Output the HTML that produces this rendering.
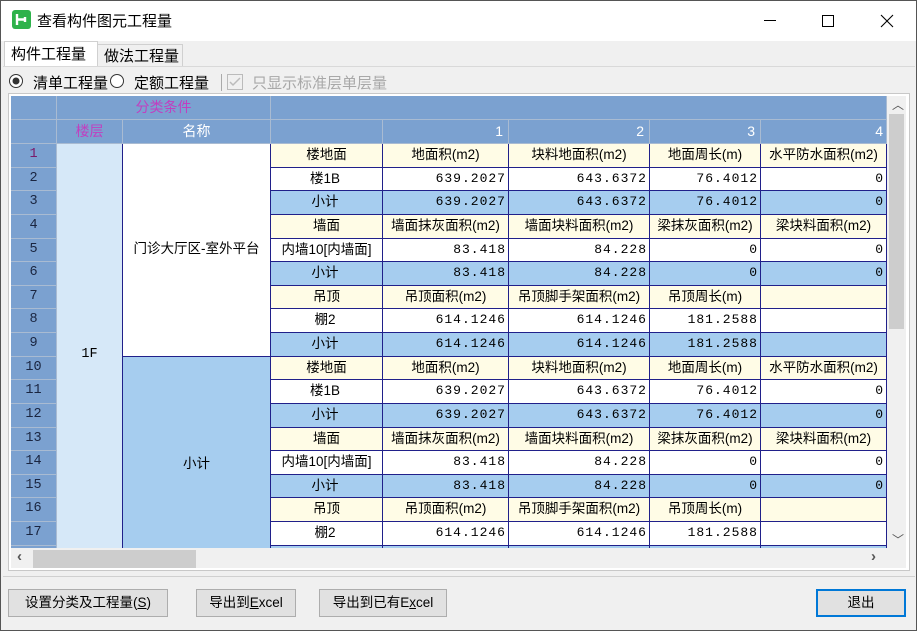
<!DOCTYPE html>
<html><head><meta charset="utf-8"><style>
*{box-sizing:border-box;margin:0;padding:0}
body{width:917px;height:631px;background:#f0f0f0;font-family:"Liberation Sans","Noto Sans CJK SC",sans-serif;font-size:14px;color:#000;position:relative;overflow:hidden}
.win{position:absolute;left:0;top:0;width:917px;height:631px;border:1px solid #555;background:#f0f0f0}
.title{position:absolute;left:0;top:0;width:915px;height:40px;background:#fff}
.abs{position:absolute}
.tab{position:absolute;border:1px solid #d0d0d0;border-bottom:none;background:#f0f0f0;font-size:15px;padding:1px 0 0 6px}
.grid{position:absolute;left:10px;top:143px;width:876px;height:404px;overflow:hidden;display:grid;grid-template-columns:46px 66px 148px 112px 126px 141px 111px 126px;grid-template-rows:repeat(18,23.625px);font-size:13.5px}
.grid div{border-right:1px solid #20208a;border-bottom:1px solid #20208a;white-space:nowrap;overflow:hidden;line-height:22px}
.grid .rn{background:#7ba1d0;border-color:#a9bbd2;text-align:center;color:#1a2540;font-family:"Liberation Mono",monospace}
.y{background:#fffce6;text-align:center}
.w{background:#fff;text-align:right;padding-right:3px}
.b{background:#a6cdef;text-align:right;padding-right:3px}
.w.n,.b.n{font-family:"Liberation Mono",monospace;font-size:13px;letter-spacing:1px;padding-right:2px}
.c{text-align:center}
.hdr{position:absolute;background:#7ba1d0;border-right:1px solid #a9bbd2;border-bottom:1px solid #a9bbd2;color:#fff;font-size:14px;text-align:center;line-height:23px}
.btn{position:absolute;top:588px;height:28px;background:#e1e1e1;border:1px solid #adadad;font-size:13.5px;text-align:center;line-height:26px}
</style></head><body><div class="win">
<div class="title">
<div class="abs" style="left:11px;top:9px;width:19px;height:19px;background:#2eb24b;border-radius:3px"><svg width="19" height="19"><path d="M5 4v11M5 9.5h8M13 7v5" stroke="#fff" stroke-width="2.4" fill="none"/></svg></div>
<div class="abs" style="left:36px;top:9px;font-size:15px">查看构件图元工程量</div>
<div class="abs" style="left:763px;top:19px;width:12px;height:1px;background:#000"></div>
<div class="abs" style="left:821px;top:14px;width:12px;height:12px;border:1px solid #000"></div>
<svg class="abs" style="left:879px;top:13px" width="14" height="14"><path d="M1 1L13 13M13 1L1 13" stroke="#000" stroke-width="1.1"/></svg>
</div>
<div class="tab" style="left:3px;top:40px;width:94px;height:26px;background:#fff;border-color:#d0d0d0">构件工程量</div>
<div class="tab" style="left:96px;top:43px;width:86px;height:22px;padding-top:0">做法工程量</div>
<div class="abs" style="left:2px;top:65px;width:912px;height:1px;background:#d9d9d9"></div>
<svg class="abs" style="left:7px;top:72px" width="16" height="16"><circle cx="8" cy="8" r="6.5" fill="#fff" stroke="#333"/><circle cx="8" cy="8" r="3.5" fill="#333"/></svg>
<div class="abs" style="left:32px;top:71px;font-size:15px">清单工程量</div>
<svg class="abs" style="left:108px;top:72px" width="16" height="16"><circle cx="8" cy="8" r="6.5" fill="#fff" stroke="#333"/></svg>
<div class="abs" style="left:133px;top:71px;font-size:15px">定额工程量</div>
<div class="abs" style="left:220px;top:73px;width:1px;height:17px;background:#aaa"></div>
<svg class="abs" style="left:226px;top:73px" width="16" height="16"><rect x="0.5" y="0.5" width="15" height="15" fill="#f0f0f0" stroke="#bbb"/><path d="M3 8l3 3 7-7" stroke="#bbb" stroke-width="1.5" fill="none"/></svg>
<div class="abs" style="left:251px;top:71px;font-size:15px;color:#a8a8a8">只显示标准层单层量</div>
<div class="abs" style="left:7px;top:92px;width:902px;height:478px;border:1px solid #c8c8c8;background:#fff"></div>
<div class="hdr" style="left:10px;top:95px;width:46px;height:24px"></div>
<div class="hdr" style="left:56px;top:95px;width:214px;height:24px;color:#c040c0">分类条件</div>
<div class="hdr" style="left:270px;top:95px;width:616px;height:24px"></div>
<div class="hdr" style="left:10px;top:119px;width:46px;height:24px"></div>
<div class="hdr" style="left:56px;top:119px;width:66px;height:24px;color:#c040c0">楼层</div>
<div class="hdr" style="left:122px;top:119px;width:148px;height:24px">名称</div>
<div class="hdr" style="left:270px;top:119px;width:112px;height:24px"></div>
<div class="hdr" style="left:382px;top:119px;width:126px;height:24px;text-align:right;padding-right:5px">1</div>
<div class="hdr" style="left:508px;top:119px;width:141px;height:24px;text-align:right;padding-right:5px">2</div>
<div class="hdr" style="left:649px;top:119px;width:111px;height:24px;text-align:right;padding-right:5px">3</div>
<div class="hdr" style="left:760px;top:119px;width:126px;height:24px;text-align:right;padding-right:3px">4</div>
<div class="grid">
<div class="rn" style="color:#7a1a6a">1</div><div style="grid-row:1/19;grid-column:2;background:#d6e8f8;line-height:422px;text-align:center;font-family:'Liberation Mono',monospace">1F</div><div class="c" style="grid-row:1/10;grid-column:3;background:#fff;line-height:210px">门诊大厅区-室外平台</div>
<div class="y">楼地面</div><div class="y">地面积(m2)</div><div class="y">块料地面积(m2)</div><div class="y">地面周长(m)</div><div class="y">水平防水面积(m2)</div>
<div class="rn">2</div><div class="w c" style="text-align:center">楼1B</div><div class="w n">639.2027</div><div class="w n">643.6372</div><div class="w n">76.4012</div><div class="w n">0</div>
<div class="rn">3</div><div class="b" style="text-align:center">小计</div><div class="b n">639.2027</div><div class="b n">643.6372</div><div class="b n">76.4012</div><div class="b n">0</div>
<div class="rn">4</div><div class="y">墙面</div><div class="y">墙面抹灰面积(m2)</div><div class="y">墙面块料面积(m2)</div><div class="y">梁抹灰面积(m2)</div><div class="y">梁块料面积(m2)</div>
<div class="rn">5</div><div class="w" style="text-align:center;padding:0">内墙10[内墙面]</div><div class="w n">83.418</div><div class="w n">84.228</div><div class="w n">0</div><div class="w n">0</div>
<div class="rn">6</div><div class="b" style="text-align:center">小计</div><div class="b n">83.418</div><div class="b n">84.228</div><div class="b n">0</div><div class="b n">0</div>
<div class="rn">7</div><div class="y">吊顶</div><div class="y">吊顶面积(m2)</div><div class="y">吊顶脚手架面积(m2)</div><div class="y">吊顶周长(m)</div><div class="y"></div>
<div class="rn">8</div><div class="w" style="text-align:center">棚2</div><div class="w n">614.1246</div><div class="w n">614.1246</div><div class="w n">181.2588</div><div class="w"></div>
<div class="rn">9</div><div class="b" style="text-align:center">小计</div><div class="b n">614.1246</div><div class="b n">614.1246</div><div class="b n">181.2588</div><div class="b"></div>
<div class="rn">10</div><div class="c" style="grid-row:10/19;grid-column:3;background:#a6cdef;line-height:214px">小计</div>
<div class="y">楼地面</div><div class="y">地面积(m2)</div><div class="y">块料地面积(m2)</div><div class="y">地面周长(m)</div><div class="y">水平防水面积(m2)</div>
<div class="rn">11</div><div class="w c" style="text-align:center">楼1B</div><div class="w n">639.2027</div><div class="w n">643.6372</div><div class="w n">76.4012</div><div class="w n">0</div>
<div class="rn">12</div><div class="b" style="text-align:center">小计</div><div class="b n">639.2027</div><div class="b n">643.6372</div><div class="b n">76.4012</div><div class="b n">0</div>
<div class="rn">13</div><div class="y">墙面</div><div class="y">墙面抹灰面积(m2)</div><div class="y">墙面块料面积(m2)</div><div class="y">梁抹灰面积(m2)</div><div class="y">梁块料面积(m2)</div>
<div class="rn">14</div><div class="w" style="text-align:center;padding:0">内墙10[内墙面]</div><div class="w n">83.418</div><div class="w n">84.228</div><div class="w n">0</div><div class="w n">0</div>
<div class="rn">15</div><div class="b" style="text-align:center">小计</div><div class="b n">83.418</div><div class="b n">84.228</div><div class="b n">0</div><div class="b n">0</div>
<div class="rn">16</div><div class="y">吊顶</div><div class="y">吊顶面积(m2)</div><div class="y">吊顶脚手架面积(m2)</div><div class="y">吊顶周长(m)</div><div class="y"></div>
<div class="rn">17</div><div class="w" style="text-align:center">棚2</div><div class="w n">614.1246</div><div class="w n">614.1246</div><div class="w n">181.2588</div><div class="w"></div>
<div class="rn">18</div><div class="b" style="text-align:center">小计</div><div class="b n">614.1246</div><div class="b n">614.1246</div><div class="b n">181.2588</div><div class="b"></div>
</div>
<div class="abs" style="left:886px;top:95px;width:19px;height:452px;background:#f0f0f0"></div>
<div class="abs" style="left:888px;top:113px;width:15px;height:215px;background:#cdcdcd"></div>
<div class="abs" style="left:891px;top:95px;font-size:12px;color:#555">︿</div>
<div class="abs" style="left:891px;top:530px;font-size:12px;color:#555">﹀</div>
<div class="abs" style="left:10px;top:547px;width:895px;height:20px;background:#f0f0f0"></div>
<div class="abs" style="left:32px;top:549px;width:163px;height:18px;background:#cdcdcd"></div>
<div class="abs" style="left:16px;top:547px;font-size:15px;font-weight:bold;color:#555">‹</div>
<div class="abs" style="left:870px;top:547px;font-size:15px;font-weight:bold;color:#555">›</div>
<div class="abs" style="left:2px;top:575px;width:912px;height:1px;background:#d0d0d0"></div>
<div class="btn" style="left:7px;width:160px">设置分类及工程量(<u>S</u>)</div>
<div class="btn" style="left:195px;width:100px">导出到<u>E</u>xcel</div>
<div class="btn" style="left:318px;width:128px">导出到已有E<u>x</u>cel</div>
<div class="btn" style="left:815px;width:90px;border:2px solid #0078d7;line-height:24px">退出</div>
</div></body></html>
